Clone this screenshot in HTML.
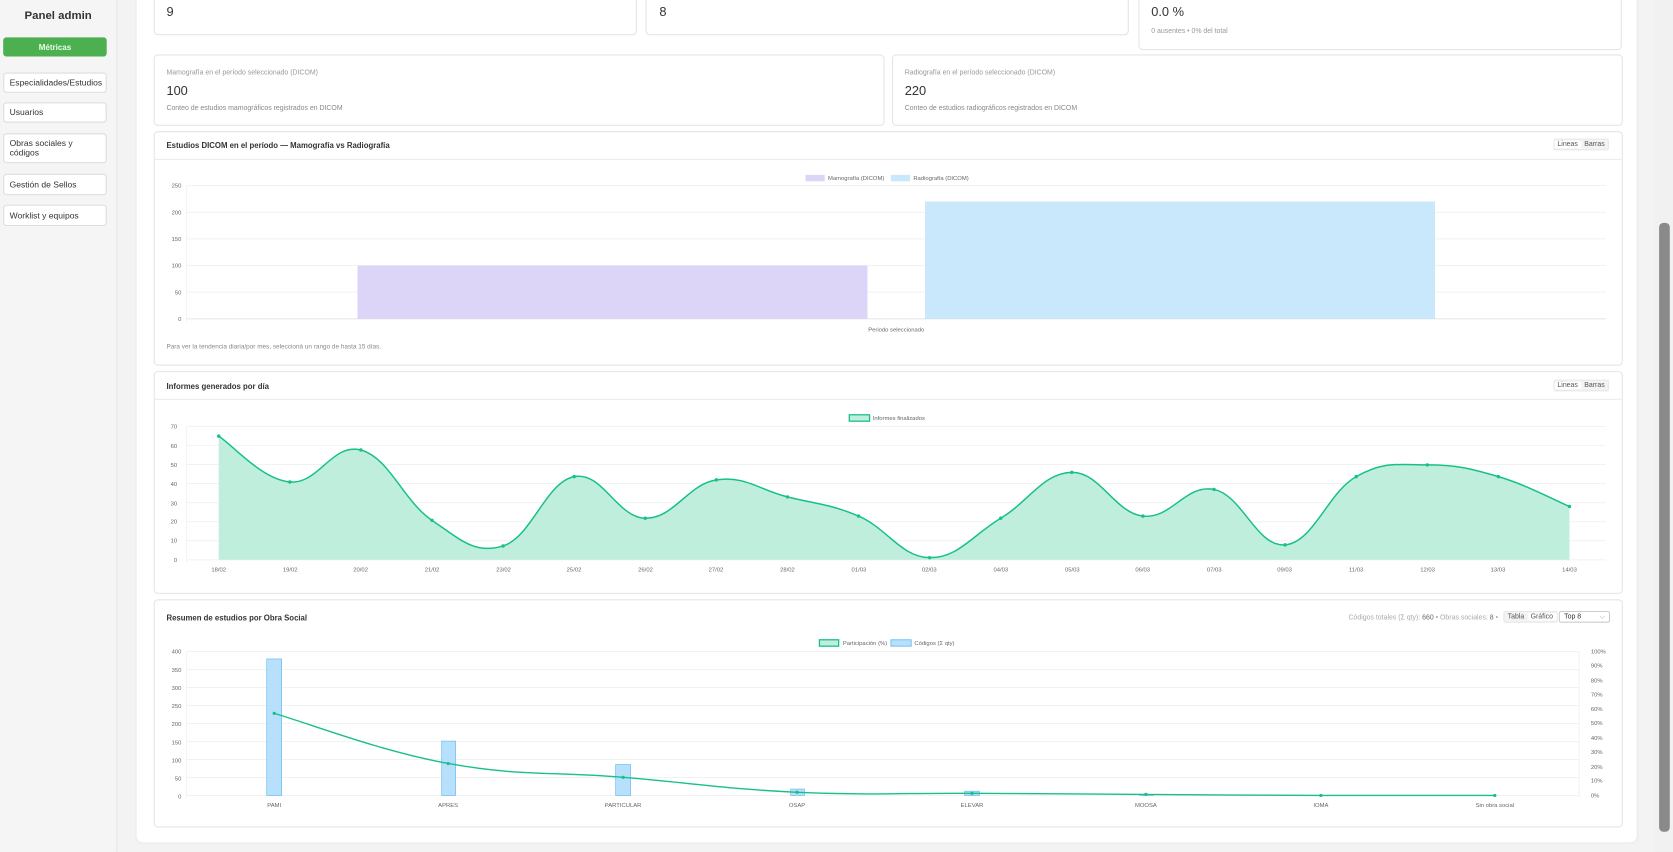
<!DOCTYPE html>
<html><head><meta charset="utf-8">
<style>
*{box-sizing:border-box;margin:0;padding:0}
html,body{width:1673px;height:852px;overflow:hidden;background:#f3f3f3;font-family:"Liberation Sans",sans-serif;color:#333}
#w{position:absolute;left:0;top:0;width:1568px;height:799px;transform:scale(1.06696,1.0663);transform-origin:0 0;background:#f3f3f3}
.sb{position:absolute;left:0;top:0;width:110px;height:799px;background:#f5f5f5;border-right:1px solid #e6e6e6}
.sb h1{font-size:10.7px;font-weight:bold;text-align:center;margin-top:9px;color:#333}
.btn{position:absolute;left:3px;width:97px;background:#fff;border:1px solid #ddd;border-radius:3px;font-size:8px;color:#333;padding:0 5px;display:flex;align-items:center;line-height:9px}
.act{background:#4caf50;border-color:#4caf50;color:#e8ffe8;font-weight:bold;justify-content:center;font-size:7.5px}
.main{position:absolute;left:128px;top:0;width:1406px;height:790px;background:#fff;border-radius:0 0 6px 6px;box-shadow:0 0 2px #ddd}
.card{position:absolute;background:#fff;border:1px solid #e5e5e5;border-radius:4px}
.lbl{font-size:6.5px;color:#999;position:absolute;white-space:nowrap}
.val{font-size:12px;color:#333;position:absolute}
.ct{position:absolute;font-size:7.3px;font-weight:bold;color:#333}
.hd{position:absolute;left:0;right:0;height:1px;background:#ececec}
.tg{position:absolute;font-size:6.5px;color:#555;background:#f3f3f3;border:1px solid #e8e8e8;border-radius:2px;display:flex;height:11px;align-items:center}
.tg span{padding:0 3px}
.tg span.on{background:#fff}
.scr{position:absolute;left:1551px;top:0;width:17px;height:799px;background:#f1f1f1}
.th{position:absolute;left:1555px;top:209px;width:10px;height:571px;background:#8a8a8a;border-radius:4px}
svg{position:absolute;left:0;top:0}
svg text{font-family:"Liberation Sans",sans-serif}
</style></head><body><div id="w">
<div class="sb"><h1>Panel admin</h1>
<div class="btn act" style="top:35px;height:18px">Métricas</div>
<div class="btn" style="top:68px;height:19px">Especialidades/Estudios</div>
<div class="btn" style="top:96px;height:19px">Usuarios</div>
<div class="btn" style="top:125px;height:28px">Obras sociales y<br>códigos</div>
<div class="btn" style="top:163px;height:20px">Gestión de Sellos</div>
<div class="btn" style="top:192px;height:20px">Worklist y equipos</div>
</div>
<div class="main"></div>
<div class="card" style="left:144px;top:-5px;width:453px;height:38px"><div class="val" style="left:11px;top:8px">9</div></div>
<div class="card" style="left:605px;top:-5px;width:453px;height:38px"><div class="val" style="left:12px;top:8px">8</div></div>
<div class="card" style="left:1067px;top:-5px;width:453px;height:52px"><div class="val" style="left:11px;top:8px">0.0 %</div><div class="lbl" style="left:11px;top:30px">0 ausentes • 0% del total</div></div>
<div class="card" style="left:144px;top:51px;width:685px;height:67px"><div class="lbl" style="left:11px;top:13px">Mamografía en el período seleccionado (DICOM)</div><div class="val" style="left:11px;top:26px">100</div><div class="lbl" style="left:11px;top:46px;color:#888">Conteo de estudios mamográficos registrados en DICOM</div></div>
<div class="card" style="left:836px;top:51px;width:685px;height:67px"><div class="lbl" style="left:11px;top:13px">Radiografía en el período seleccionado (DICOM)</div><div class="val" style="left:11px;top:26px">220</div><div class="lbl" style="left:11px;top:46px;color:#888">Conteo de estudios radiográficos registrados en DICOM</div></div>
<div class="card" style="left:144px;top:123px;width:1377px;height:220px"><div class="ct" style="left:11px;top:8px">Estudios DICOM en el período — Mamografía vs Radiografía</div><div class="hd" style="top:25px"></div><div class="tg" style="right:12px;top:6px"><span class="on">Lineas</span><span>Barras</span></div><div class="lbl" style="left:11px;top:199px;color:#888;font-size:6px">Para ver la tendencia diaria/por mes, seleccioná un rango de hasta 15 días.</div></div>
<div class="card" style="left:144px;top:348px;width:1377px;height:209px"><div class="ct" style="left:11px;top:9px">Informes generados por día</div><div class="hd" style="top:25px"></div><div class="tg" style="right:12px;top:7px"><span class="on">Lineas</span><span>Barras</span></div></div>
<div class="card" style="left:144px;top:562px;width:1377px;height:214px"><div class="ct" style="left:11px;top:12px">Resumen de estudios por Obra Social</div>
<div class="lbl" style="right:116px;top:13px;color:#aaa">Códigos totales (Σ qty): <b style="color:#666;font-weight:normal">660</b> • Obras sociales: <b style="color:#666;font-weight:normal">8</b> •</div>
<div class="tg" style="left:1264px;top:10px"><span>Tabla</span><span class="on">Gráfico</span></div>
<div style="position:absolute;left:1316px;top:10px;width:48px;height:11px;border:1px solid #ccc;border-radius:2px;font-size:6.5px;color:#333;padding-left:4px;line-height:10px">Top 8<span style="position:absolute;right:4px;color:#999">⌵</span></div></div>
<svg width="1568" height="799" font-size="5.5" fill="#666">
<g stroke="#eee" stroke-width="0.7"><line x1="175" x2="1505" y1="174" y2="174"/><line x1="175" x2="1505" y1="199" y2="199"/><line x1="175" x2="1505" y1="224" y2="224"/><line x1="175" x2="1505" y1="249" y2="249"/><line x1="175" x2="1505" y1="274" y2="274"/><line x1="175" x2="1505" y1="299" y2="299" stroke="#ddd"/><line x1="175" x2="175" y1="174" y2="302"/></g>
<g text-anchor="end"><text x="170" y="176">250</text><text x="170" y="201">200</text><text x="170" y="226">150</text><text x="170" y="251">100</text><text x="170" y="276">50</text><text x="170" y="301">0</text></g>
<rect x="335" y="249" width="478" height="50" fill="#ddd5f8"/><rect x="867" y="189" width="478" height="110" fill="#c9e8fb"/>
<text x="840" y="311" text-anchor="middle">Periodo seleccionado</text>
<rect x="755" y="164" width="18" height="6" fill="#ddd5f8"/><text x="776" y="169">Mamografía (DICOM)</text>
<rect x="835" y="164" width="18" height="6" fill="#c9e8fb"/><text x="856" y="169">Radiografía (DICOM)</text>
<g stroke="#eee" stroke-width="0.7" id="g2"></g>
<path id="a2" fill="#c0eedd" stroke="none"/><path id="l2" fill="none" stroke="#17c08a" stroke-width="1.4"/>
<g id="p2" fill="#17c08a"></g>
<rect x="796" y="389" width="19" height="6" fill="#c0eedd" stroke="#17c08a" stroke-width="1.2"/><text x="818" y="394">Informes finalizados</text>
<g stroke="#eee" stroke-width="0.7" id="g3"></g>
<rect x="768" y="600" width="18" height="6" fill="#c0eedd" stroke="#17c08a" stroke-width="1.2"/><text x="790" y="605">Participación (%)</text>
<rect x="835" y="600" width="19" height="6" fill="#b6e0fb" stroke="#64b8ee" stroke-width="0.8"/><text x="857" y="605">Códigos (Σ qty)</text>
<g fill="#b6e0fb" stroke="#64b8ee" stroke-width="0.6"><rect x="250" y="618" width="14" height="128"/><rect x="414" y="695" width="13" height="51"/><rect x="577" y="717" width="14" height="29"/><rect x="741" y="740" width="13" height="6"/><rect x="904" y="742" width="14" height="4"/><rect x="1068" y="745" width="13" height="1"/></g>
<path id="l3" fill="none" stroke="#17c08a" stroke-width="1.3"/><g id="p3" fill="#17c08a"></g>
<g text-anchor="middle"><text x="257" y="757">PAMI</text><text x="420" y="757">APRES</text><text x="584" y="757">PARTICULAR</text><text x="747" y="757">OSAP</text><text x="911" y="757">ELEVAR</text><text x="1074" y="757">MOOSA</text><text x="1238" y="757">IOMA</text><text x="1401" y="757">Sin obra social</text></g>
<g text-anchor="end"><text x="170" y="613">400</text><text x="170" y="630">350</text><text x="170" y="647">300</text><text x="170" y="664">250</text><text x="170" y="681">200</text><text x="170" y="698">150</text><text x="170" y="715">100</text><text x="170" y="732">50</text><text x="170" y="749">0</text></g>
<g><text x="1491" y="613">100%</text><text x="1491" y="626">90%</text><text x="1491" y="640">80%</text><text x="1491" y="653">70%</text><text x="1491" y="667">60%</text><text x="1491" y="680">50%</text><text x="1491" y="694">40%</text><text x="1491" y="707">30%</text><text x="1491" y="721">20%</text><text x="1491" y="734">10%</text><text x="1491" y="748">0%</text></g>
<g text-anchor="middle"><text x="205" y="536">18/02</text><text x="272" y="536">19/02</text><text x="338" y="536">20/02</text><text x="405" y="536">21/02</text><text x="472" y="536">23/02</text><text x="538" y="536">25/02</text><text x="605" y="536">26/02</text><text x="671" y="536">27/02</text><text x="738" y="536">28/02</text><text x="805" y="536">01/03</text><text x="871" y="536">02/03</text><text x="938" y="536">04/03</text><text x="1005" y="536">05/03</text><text x="1071" y="536">06/03</text><text x="1138" y="536">07/03</text><text x="1204" y="536">09/03</text><text x="1271" y="536">11/03</text><text x="1338" y="536">12/03</text><text x="1404" y="536">13/03</text><text x="1471" y="536">14/03</text></g>
<g text-anchor="end"><text x="166" y="402">70</text><text x="166" y="420">60</text><text x="166" y="438">50</text><text x="166" y="456">40</text><text x="166" y="474">30</text><text x="166" y="491">20</text><text x="166" y="509">10</text><text x="166" y="527">0</text></g>
</svg>
<div class="scr"></div><div class="th"></div>
</div>
<script>
function sm(p,t){var d="M"+p[0][0]+","+p[0][1];for(var i=0;i<p.length-1;i++){var a=p[i-1]||p[i],b=p[i],c=p[i+1],e=p[i+2]||c;d+=" C"+(b[0]+(c[0]-a[0])*t)+","+(b[1]+(c[1]-a[1])*t)+" "+(c[0]-(e[0]-b[0])*t)+","+(c[1]-(e[1]-b[1])*t)+" "+c[0]+","+c[1];}return d;}
var ns="http://www.w3.org/2000/svg";
function el(par,tag,at){var e=document.createElementNS(ns,tag);for(var k in at)e.setAttribute(k,at[k]);document.getElementById(par).appendChild(e);}
var ys=[409,452,422,488,512,447,486,450,466,484,523,486,443,484,459,511,447,436,447,475];
var p=ys.map(function(y,i){return[205+i*66.63,y]});
var d=sm(p,0.2);
document.getElementById("l2").setAttribute("d",d);
document.getElementById("a2").setAttribute("d",d+" L1471,525 L205,525 Z");
p.forEach(function(q){el("p2","circle",{cx:q[0],cy:q[1],r:1.6})});
for(var i=0;i<8;i++){var y=400+i*17.86;el("g2","line",{x1:175,x2:1505,y1:y,y2:y});}
el("g2","line",{x1:175,x2:175,y1:400,y2:527});
for(var i=0;i<9;i++){var y=611+i*16.9;el("g3","line",{x1:175,x2:1480,y1:y,y2:y});}
el("g3","line",{x1:175,x2:175,y1:611,y2:748});el("g3","line",{x1:1480,x2:1480,y1:611,y2:748});
var q3=[[257,669],[420,716],[584,729],[747,743],[911,744],[1074,745],[1238,746],[1401,746]];
document.getElementById("l3").setAttribute("d",sm(q3,0.2));
q3.forEach(function(q){el("p3","circle",{cx:q[0],cy:q[1],r:1.5})});
</script>
</body></html>
